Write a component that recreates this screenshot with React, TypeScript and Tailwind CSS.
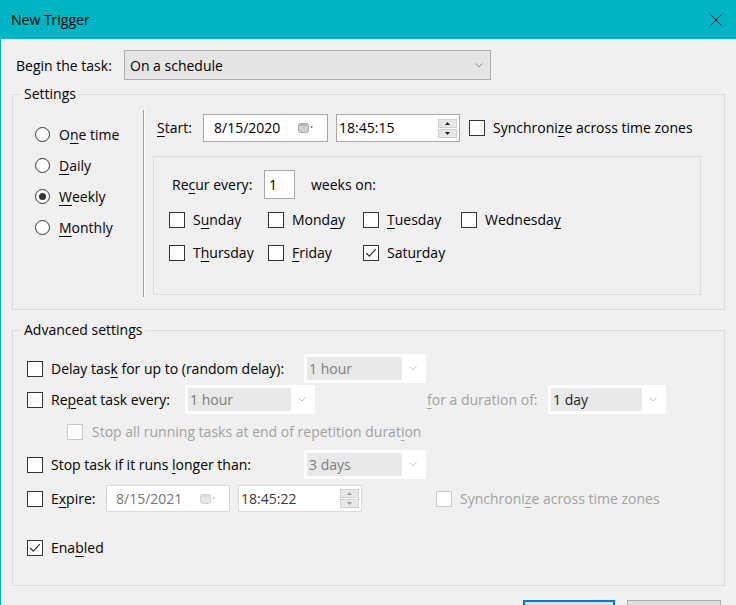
import React from "react";

const U = ({ children }: { children: React.ReactNode }) => (
  <span className="underline underline-offset-[3px] decoration-1">{children}</span>
);

function Chevron({ color = "#7a7a7a" }: { color?: string }) {
  return (
    <svg width="8" height="5" viewBox="0 0 8 5">
      <path d="M0.5 0.5 L4 4 L7.5 0.5" stroke={color} strokeWidth="1" fill="none" />
    </svg>
  );
}

function Check({ checked = false, disabled = false }: { checked?: boolean; disabled?: boolean }) {
  return (
    <span
      className={
        disabled
          ? "w-[16px] h-[16px] shrink-0 border border-[#c8c8c8] bg-white flex"
          : "w-[16px] h-[16px] shrink-0 border border-[#333333] bg-white flex items-center justify-center"
      }
    >
      {checked && (
        <svg width="12" height="10" viewBox="0 0 12 10">
          <path d="M1.2 5 L4.3 8.2 L10.8 1.2" stroke="#333333" strokeWidth="1.2" fill="none" />
        </svg>
      )}
    </span>
  );
}

function Radio({ on = false }: { on?: boolean }) {
  return (
    <span className="w-[15px] h-[15px] shrink-0 rounded-full border border-[#333333] bg-white flex items-center justify-center">
      {on && <span className="w-[7px] h-[7px] rounded-full bg-[#333333]" />}
    </span>
  );
}

function CalIcon({ disabled = false }: { disabled?: boolean }) {
  return (
    <svg width="16" height="10" viewBox="0 0 16 10">
      <rect
        x="0.5"
        y="0.5"
        width="10"
        height="9"
        rx="2"
        fill={disabled ? "#e6e6e6" : "#cfcfcf"}
        stroke={disabled ? "#d2d2d2" : "#a9a9a9"}
      />
      <rect x="1" y="1" width="9" height="2" rx="1" fill={disabled ? "#dcdcdc" : "#b5b5b5"} />
      <path d="M12 3.5 L15 3.5 L13.5 5.2 Z" fill={disabled ? "#b0b0b0" : "#555555"} />
    </svg>
  );
}

function Spin({ disabled = false }: { disabled?: boolean }) {
  const tri = disabled ? "#9a9a9a" : "#222222";
  return (
    <div className="w-[19px] h-[19px] flex flex-col gap-[1px]">
      <div className="flex-1 bg-[#e8e8e8] border border-[#d0d0d0] flex items-center justify-center">
        <svg width="5" height="3" viewBox="0 0 5 3">
          <path d="M0 3 L2.5 0 L5 3 Z" fill={tri} />
        </svg>
      </div>
      <div className="flex-1 bg-[#e8e8e8] border border-[#d0d0d0] flex items-center justify-center">
        <svg width="5" height="3" viewBox="0 0 5 3">
          <path d="M0 0 L5 0 L2.5 3 Z" fill={tri} />
        </svg>
      </div>
    </div>
  );
}

function DSelect({ w, text, dark = false }: { w: string; text: string; dark?: boolean }) {
  return (
    <div className={`${w} h-[29px] bg-white flex items-center pl-[3px] pr-[2px]`}>
      <div
        className={
          dark
            ? "h-[23px] flex-1 bg-[#e9e9e9] flex items-center pl-[2px] text-[#222222]"
            : "h-[23px] flex-1 bg-[#e9e9e9] flex items-center pl-[2px] text-[#7d7d7d]"
        }
      >
        {text}
      </div>
      <div className="w-[22px] flex justify-center">
        <Chevron color="#c4c4c4" />
      </div>
    </div>
  );
}

export default function App() {
  const disabledText = "text-[#a2a2a2]";
  return (
    <div className="w-[736px] h-[605px] overflow-hidden bg-[#f0f0f0] border-l border-[#00b4c3] text-[14px] text-black leading-none font-['Open_Sans','Noto_Sans',sans-serif]">
      {/* Title bar */}
      <div className="h-[39px] bg-[#00b4c3] flex items-center justify-between pl-[10px] pr-[14px]">
        <span className="text-[14px]">New Trigger</span>
        <svg width="12" height="12" viewBox="0 0 12 12">
          <path d="M0.5 0.5 L11.5 11.5 M11.5 0.5 L0.5 11.5" stroke="#111111" strokeWidth="1" />
        </svg>
      </div>

      <div className="px-[11px]">
        {/* Begin the task */}
        <div className="mt-[11px] h-[30px] flex items-center">
          <span className="w-[112px] pl-[4px] pt-[2px]">Begin the task:</span>
          <div className="w-[367px] h-[30px] bg-[#e5e5e5] border border-[#adadad] flex items-center justify-between pl-[5px] pr-[7px]">
            <span className="pt-[2px]">On a schedule</span>
            <Chevron color="#8a8a8a" />
          </div>
        </div>

        {/* Settings */}
        <fieldset className="mt-[4px] border border-[#dcdcdc]">
          <legend className="ml-[8px] px-[3px] leading-[20px]">Settings</legend>
          <div className="flex">
            <div className="w-[130px] pl-[22px] pt-[15px]">
              <div className="h-[31px] flex items-center gap-[9px]">
                <Radio />
                <span>
                  O<U>n</U>e time
                </span>
              </div>
              <div className="h-[31px] flex items-center gap-[9px]">
                <Radio />
                <span>
                  <U>D</U>aily
                </span>
              </div>
              <div className="h-[31px] flex items-center gap-[9px]">
                <Radio on />
                <span>
                  <U>W</U>eekly
                </span>
              </div>
              <div className="h-[31px] flex items-center gap-[9px]">
                <Radio />
                <span>
                  <U>M</U>onthly
                </span>
              </div>
            </div>
            <div className="mt-[6px] h-[187px] w-[2px] border-l border-[#a0a0a0] border-r border-r-white" />
            <div className="pl-[8px] pb-[14px]">
              <div className="mt-[10px] h-[28px] flex items-center">
                <span className="w-[50px] pl-[4px]">
                  <U>S</U>tart:
                </span>
                <div className="w-[125px] h-[28px] bg-white border border-[#a8a8a8] flex items-center justify-between pl-[10px] pr-[13px]">
                  <span>8/15/2020</span>
                  <CalIcon />
                </div>
                <div className="ml-[8px] w-[124px] h-[28px] bg-white border border-[#a8a8a8] flex items-center justify-between pl-[2px] pr-[2px]">
                  <span>18:45:15</span>
                  <Spin />
                </div>
                <span className="ml-[9px] flex">
                  <Check />
                </span>
                <span className="ml-[8px]">
                  Synchroni<U>z</U>e across time zones
                </span>
              </div>
              <div className="mt-[14px] w-[548px] h-[139px] border border-[#dcdcdc] pl-[15px] pt-[13px]">
                <div className="h-[29px] flex items-center pl-[3px]">
                  <span className="w-[92px]">
                    Re<U>c</U>ur every:
                  </span>
                  <div className="w-[31px] h-[29px] bg-white border border-[#a8a8a8] flex items-center pl-[4px]">1</div>
                  <span className="ml-[16px]">weeks on:</span>
                </div>
                <div className="mt-[9px] h-[24px] flex items-center">
                  <div className="w-[99px] flex items-center gap-[8px]">
                    <Check />
                    <span>
                      S<U>u</U>nday
                    </span>
                  </div>
                  <div className="w-[95px] flex items-center gap-[8px]">
                    <Check />
                    <span>
                      Mond<U>a</U>y
                    </span>
                  </div>
                  <div className="w-[98px] flex items-center gap-[8px]">
                    <Check />
                    <span>
                      <U>T</U>uesday
                    </span>
                  </div>
                  <div className="flex items-center gap-[8px]">
                    <Check />
                    <span>
                      Wednesda<U>y</U>
                    </span>
                  </div>
                </div>
                <div className="mt-[9px] h-[24px] flex items-center">
                  <div className="w-[99px] flex items-center gap-[8px]">
                    <Check />
                    <span>
                      T<U>h</U>ursday
                    </span>
                  </div>
                  <div className="w-[95px] flex items-center gap-[8px]">
                    <Check />
                    <span>
                      <U>F</U>riday
                    </span>
                  </div>
                  <div className="w-[98px] flex items-center gap-[8px]">
                    <Check checked />
                    <span>
                      Satu<U>r</U>day
                    </span>
                  </div>
                </div>
              </div>
            </div>
          </div>
        </fieldset>

        {/* Advanced settings */}
        <fieldset className="mt-[10px] border border-[#dcdcdc] pb-[25px]">
          <legend className="ml-[8px] px-[3px] leading-[20px]">Advanced settings</legend>
          <div className="pl-[14px]">
            <div className="mt-[14px] h-[29px] flex items-center">
              <Check />
              <span className="ml-[8px] w-[253px]">
                Delay tas<U>k</U> for up to (random delay):
              </span>
              <DSelect w="w-[122px]" text="1 hour" />
            </div>
            <div className="mt-[2px] h-[29px] flex items-center">
              <Check />
              <span className="ml-[8px] w-[134px]">
                Re<U>p</U>eat task every:
              </span>
              <DSelect w="w-[130px]" text="1 hour" />
              <span className={`ml-[112px] w-[121px] ${disabledText}`}>
                <U>f</U>or a duration of:
              </span>
              <DSelect w="w-[118px]" text="1 day" dark />
            </div>
            <div className="mt-[3px] h-[29px] flex items-center pl-[40px]">
              <Check disabled />
              <span className={`ml-[9px] ${disabledText}`}>
                Stop all running tasks at end of repetition durat<U>i</U>on
              </span>
            </div>
            <div className="mt-[4px] h-[29px] flex items-center">
              <Check />
              <span className="ml-[8px] w-[253px]">
                Stop task if it runs <U>l</U>onger than:
              </span>
              <DSelect w="w-[122px]" text="3 days" />
            </div>
            <div className="mt-[6px] h-[27px] flex items-center">
              <Check />
              <span className="ml-[8px] w-[55px]">
                E<U>x</U>pire:
              </span>
              <div className="w-[124px] h-[27px] bg-white border border-[#dadada] flex items-center justify-between pl-[9px] pr-[13px] text-[#767676]">
                <span>8/15/2021</span>
                <CalIcon disabled />
              </div>
              <div className="ml-[8px] w-[124px] h-[27px] bg-white border border-[#dadada] flex items-center justify-between pl-[2px] pr-[2px] text-[#3a3a3a]">
                <span>18:45:22</span>
                <Spin disabled />
              </div>
              <span className="ml-[74px] flex">
                <Check disabled />
              </span>
              <span className={`ml-[8px] ${disabledText}`}>
                Synchroni<U>z</U>e across time zones
              </span>
            </div>
            <div className="mt-[24px] h-[24px] flex items-center">
              <Check checked />
              <span className="ml-[8px]">
                Ena<U>b</U>led
              </span>
            </div>
          </div>
        </fieldset>

        {/* Buttons (cut off at the bottom edge, as in the reference) */}
        <div className="mt-[14px] flex justify-end gap-[12px] pr-[4px]">
          <div className="w-[92px] h-[28px] border-2 border-[#0078d7] bg-[#e1e1e1]" />
          <div className="w-[94px] h-[28px] border border-[#adadad] bg-[#e1e1e1]" />
        </div>
      </div>
    </div>
  );
}
